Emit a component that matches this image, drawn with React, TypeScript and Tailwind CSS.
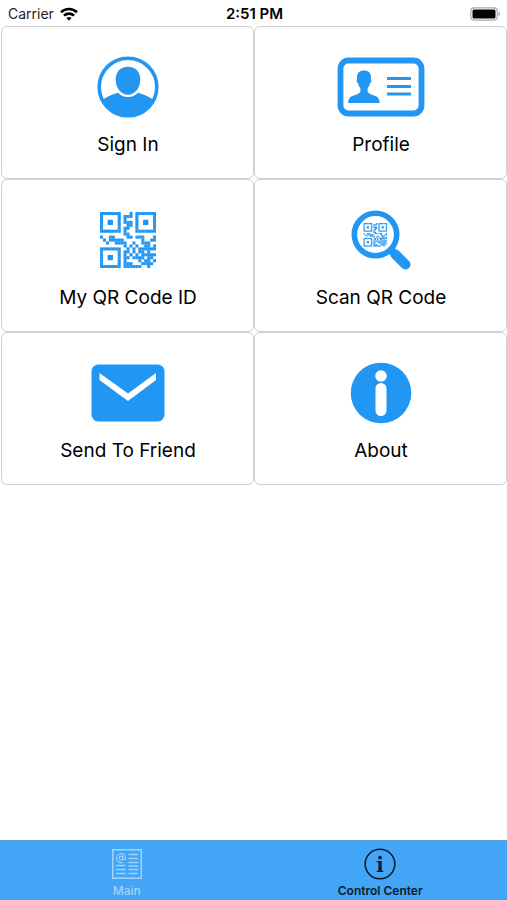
import React from 'react';

const QR_ROWS = [
  '1111111...1.1111111',
  '1.....1.111.1.....1',
  '1.....1.1...1.....1',
  '1.....1.111.1.....1',
  '1.....1..11.1.....1',
  '1.....1.11..1.....1',
  '1111111.1...1111111',
  '........11.........',
  '1..11....11.111...1',
  '.1.11111......1..11',
  '..1..1111..1..111..',
  '........1.1.1..11.1',
  '1111111..1.1.111111',
  '1.....1.11.1.11.1..',
  '1.....1.1.1.1.11111',
  '1.....1.11.1111.11.',
  '1.....1.1....1.11.1',
  '1.....1.111...1111.',
  '1111111.111111..1..',
];

const QrModules = () => (
  <>
    {QR_ROWS.flatMap((row, y) =>
      row
        .split('')
        .map((cell, x) =>
          cell === '1' ? <rect key={`${x}-${y}`} x={x} y={y} width="1.04" height="1.04" /> : null
        )
    )}
    {/* Finder centres */}
    <path d="M2.600 2.600h1.800v1.800H2.600zM14.600 2.600h1.800v1.800h-1.800zM2.600 14.600h1.800v1.800H2.600z" />
  </>
);

const SignInIcon = () => (
  <svg width="62" height="62" viewBox="0 0 62 62" aria-hidden="true">
    <circle cx="31" cy="31" r="28.800" fill="none" stroke="currentColor" strokeWidth="3.600" />
    <path
      fill="currentColor"
      d="M31 10.700c-7.700 0-12.300 5.200-12.300 12.800 0 8.300 5.300 15.200 12.300 15.200s12.300-6.900 12.300-15.200c0-7.600-4.600-12.800-12.300-12.800zM5 44.500c4-3.500 9.500-6 16-7.800C23.700 39.500 27 41 31 41s7.300-1.500 10-4.300c6.500 1.800 12 4.300 16 7.800C52.500 54 42.500 61 31 61S9.500 54 5 44.500z"
    />
  </svg>
);

const ProfileIcon = () => (
  <svg width="88" height="60" viewBox="0 0 88 60" aria-hidden="true">
    <rect x="3.500" y="3.500" width="81" height="53" rx="8" fill="none" stroke="currentColor" strokeWidth="5.800" />
    <path
      fill="currentColor"
      d="M27 13.500c-4.500 0-7 2.700-7 6.800 0 .8.100 1.500.2 2.200-.9.300-.7 3.200.8 3.800.5 2.200 1.300 3.700 2.400 4.800v3.400c-1 2.500-4 3-7.400 4.200-3.300 1.200-4.700 3.200-4.800 7.300h31.400c-.1-4.100-1.500-6.100-4.800-7.300-3.400-1.200-6.200-1.700-7.200-4.200v-3.400c1.100-1.100 1.900-2.600 2.400-4.800 1.500-.6 1.700-3.500.8-3.800.1-.7.200-1.400.2-2.200 0-4.100-2.500-6.800-7-6.800z"
    />
    <path stroke="currentColor" strokeWidth="2.900" d="M50 21.500h24M50 29.500h24M50 37h24" />
  </svg>
);

const QrIcon = () => (
  <svg width="56" height="56" viewBox="0 0 19 19" fill="currentColor" aria-hidden="true">
    <QrModules />
  </svg>
);

const ScanIcon = () => (
  <svg width="60" height="60" viewBox="0 0 60 60" aria-hidden="true">
    <circle cx="24.500" cy="24.500" r="21.200" fill="none" stroke="currentColor" strokeWidth="5.600" />
    <path stroke="currentColor" strokeWidth="8" d="M38.500 38.500l7 7" />
    <path stroke="currentColor" strokeWidth="10" strokeLinecap="round" d="M44.500 44.500l10 10" />
    <g fill="currentColor" transform="translate(12.500 13) scale(1.240)">
      <QrModules />
    </g>
  </svg>
);

const MailIcon = () => (
  <svg width="74" height="58" viewBox="0 0 74 58" aria-hidden="true">
    <rect x=".5" y=".5" width="73" height="57" rx="7" fill="currentColor" />
    <path fill="#fff" d="M8.500 9L37 29.500 65 9v7L37 37 8.500 16z" />
  </svg>
);

const AboutIcon = () => (
  <svg width="62" height="62" viewBox="0 0 62 62" aria-hidden="true">
    <circle cx="31" cy="31" r="30.300" fill="currentColor" />
    <circle cx="31" cy="14" r="5.800" fill="#fff" />
    <rect x="25.500" y="21" width="11" height="33" rx="5.500" fill="#fff" />
  </svg>
);

const NewsIcon = () => (
  <svg width="30" height="30" viewBox="0 0 30 30" fill="none" stroke="currentColor" aria-hidden="true">
    <rect x=".8" y=".8" width="28.400" height="28.400" strokeWidth="1.500" />
    <circle cx="9" cy="9" r="1.800" strokeWidth="1.200" />
    <path strokeWidth="1.100" d="M10.800 7v2.500c0 2 2.700 1.600 2.700-.6A4.500 4.500 0 1 0 11.300 13" />
    <path
      strokeWidth="1.500"
      d="M16.500 5.500H26M16.500 9.500H26M16.500 13.500H26M4 16.500h9.500M4 20.500h9.500M4 24.500h9.500M16.500 17H26M16.500 20.500H26M16.500 24.500H26"
    />
  </svg>
);

const InfoIcon = () => (
  <svg width="32" height="32" viewBox="0 0 32 32" aria-hidden="true">
    <circle cx="16" cy="16" r="14.800" fill="none" stroke="currentColor" strokeWidth="1.600" />
    <circle cx="16" cy="9.600" r="1.900" fill="currentColor" />
    <path fill="currentColor" d="M12.800 13h4.900v9.600l1.600.5v.9h-6.600v-.9l1.700-.5v-8.200l-1.600-.5z" />
  </svg>
);

const WifiIcon = () => (
  <svg width="18" height="14" viewBox="0 0 18 14" fill="none" stroke="currentColor" strokeWidth="2.600" aria-hidden="true">
    <path d="M1 5.200a11.500 11.500 0 0 1 16 0M4 8.600a7.200 7.200 0 0 1 10 0" />
    <path fill="currentColor" stroke="none" d="M9 13.800l-2.600-2.800a4 4 0 0 1 5.200 0z" />
  </svg>
);

const BatteryIcon = () => (
  <svg width="31" height="14" viewBox="0 0 31 14" aria-hidden="true">
    <rect x=".8" y=".8" width="26.400" height="12.400" rx="3.500" fill="#fff" stroke="#aaa" strokeWidth="1.200" />
    <rect x="2.500" y="2.500" width="23" height="9" rx="1.500" />
    <path d="M28.500 4.800c2 .6 2 3.800 0 4.400z" fill="#aaa" />
  </svg>
);

const MENU = [
  { label: 'Sign In', Icon: SignInIcon },
  { label: 'Profile', Icon: ProfileIcon },
  { label: 'My QR Code ID', Icon: QrIcon },
  { label: 'Scan QR Code', Icon: ScanIcon },
  { label: 'Send To Friend', Icon: MailIcon },
  { label: 'About', Icon: AboutIcon },
];

const StatusBar = () => (
  <header className="grid h-[26px] grid-cols-3 items-center pt-0.5 pr-1.5 pl-2 text-sm leading-5">
    <div className="flex items-center gap-1.5 text-[#222]">
      Carrier
      <span className="text-black">
        <WifiIcon />
      </span>
    </div>
    <div className="text-center text-[15px] font-semibold">2:51 PM</div>
    <div className="flex justify-end">
      <BatteryIcon />
    </div>
  </header>
);

export default function App() {
  return (
    <div className="flex min-h-screen flex-col bg-white font-['Inter','Liberation_Sans',sans-serif] text-black">
      <StatusBar />

      <main className="grid flex-1 grid-cols-2 content-start pl-px">
        {MENU.map(({ label, Icon }) => (
          <button
            key={label}
            className="flex h-[153px] flex-col items-center rounded-md border border-[#cfcfcf] pt-7 pl-px"
          >
            <span className="flex h-16 items-center text-[#2196f3]">
              <Icon />
            </span>
            <span className="mt-3.5 text-[19px] leading-6">{label}</span>
          </button>
        ))}
      </main>

      {/* Bottom tabs */}
      <nav className="grid h-[60px] grid-cols-2 border-t border-[#5a9fd4] bg-[#42a5f5] text-xs leading-4">
        <button className="flex flex-col items-center pt-[5px] text-[#a5d2f9]">
          <span className="flex h-9 items-center">
            <NewsIcon />
          </span>
          <span className="mt-px font-medium">Main</span>
        </button>
        <button className="flex flex-col items-center pt-[5px] text-[#0b1d2c]">
          <span className="flex h-9 items-center">
            <InfoIcon />
          </span>
          <span className="mt-px font-semibold">Control Center</span>
        </button>
      </nav>
    </div>
  );
}
